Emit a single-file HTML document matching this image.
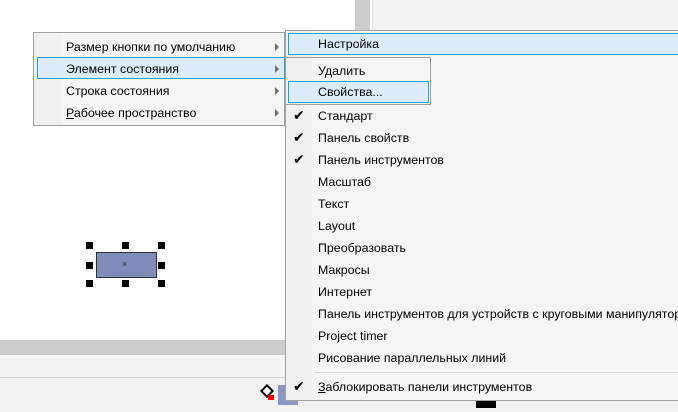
<!DOCTYPE html>
<html><head><meta charset="utf-8"><style>
*{margin:0;padding:0;box-sizing:border-box}
body{width:678px;height:412px;overflow:hidden;position:relative;background:#fff;font-family:"Segoe UI","Liberation Sans","DejaVu Sans",sans-serif;font-size:12.4px;color:#000}
.abs{position:absolute}
.menu{position:absolute;background:#f5f5f5;border:1px solid #a0a0a0}
.col{position:absolute;top:0;bottom:0;left:0;background:#f0f0f0}
.it{position:absolute;height:22px;line-height:22px;white-space:nowrap}
.hl{position:absolute;background:#dcecfc;border:1px solid #26a0da}
.arr{position:absolute;width:0;height:0;border-top:4px solid transparent;border-bottom:4px solid transparent;border-left:4px solid #707070}
.chk{position:absolute;font-size:14px;font-weight:bold}
.h{position:absolute;width:7px;height:7px;background:#000}
</style></head><body>
<div class="abs" style="left:355px;top:0;width:15px;height:30px;background:#cccccc"></div>
<div class="abs" style="left:370px;top:0;width:2px;height:30px;background:#fff"></div>
<div class="abs" style="left:372px;top:0;width:306px;height:30px;background:#f2f2f2;border-left:1px solid #ddd"></div>
<div class="abs" style="left:0;top:340px;width:678px;height:15px;background:#cccccc"></div>
<div class="abs" style="left:0;top:355px;width:678px;height:57px;background:#f2f2f2;border-top:2px solid #fff"></div>
<div class="abs" style="left:0;top:377px;width:678px;height:1px;background:#d0d0d0"></div>

<div class="abs" style="left:96px;top:252px;width:61px;height:26px;background:#7f8bb8;border:1px solid #333"></div>
<div class="abs" style="left:122px;top:259px;font-size:9px;color:#333">×</div>
<div class="h" style="left:86px;top:242px"></div><div class="h" style="left:122px;top:242px"></div><div class="h" style="left:158px;top:242px"></div>
<div class="h" style="left:86px;top:262px"></div><div class="h" style="left:158px;top:262px"></div>
<div class="h" style="left:86px;top:280px"></div><div class="h" style="left:122px;top:280px"></div><div class="h" style="left:158px;top:280px"></div>

<div class="abs" style="left:262px;top:386px;width:10px;height:10px;border:2px solid #000;transform:rotate(45deg);background:#fff"></div>
<div class="abs" style="left:268px;top:395px;width:6px;height:5px;background:#e00"></div>
<div class="abs" style="left:278px;top:385px;width:20px;height:20px;background:#8a96c4"></div>
<div class="abs" style="left:476px;top:398px;width:20px;height:10px;background:#000"></div>

<div class="menu" style="left:33px;top:32px;width:252px;height:94px;">
 <div class="col" style="width:27px"></div>
 <div class="hl" style="left:3px;top:24px;width:248px;height:22px"></div>
 <div class="it" style="left:32px;top:3px">Размер кнопки по умолчанию</div>
 <div class="it" style="left:32px;top:25px">Элемент состояния</div>
 <div class="it" style="left:32px;top:47px">Строка состояния</div>
 <div class="it" style="left:32px;top:69px"><u>Р</u>абочее пространство</div>
 <div class="arr" style="left:241px;top:10px"></div>
 <div class="arr" style="left:241px;top:32px"></div>
 <div class="arr" style="left:241px;top:54px"></div>
 <div class="arr" style="left:241px;top:76px"></div>
</div>

<div class="menu" style="left:285px;top:30px;width:400px;height:371px;">
 <div class="col" style="width:26px"></div>
 <div class="hl" style="left:2px;top:2px;width:400px;height:22px"></div>
 <div class="it" style="left:32px;top:2px">Настройка</div>
 <div class="chk" style="left:7px;top:76px">✔</div>
 <div class="chk" style="left:7px;top:98px">✔</div>
 <div class="chk" style="left:7px;top:120px">✔</div>
 <div class="it" style="left:32px;top:74px">Стандарт</div>
 <div class="it" style="left:32px;top:96px">Панель свойств</div>
 <div class="it" style="left:32px;top:118px">Панель инструментов</div>
 <div class="it" style="left:32px;top:140px">Масштаб</div>
 <div class="it" style="left:32px;top:162px">Текст</div>
 <div class="it" style="left:32px;top:184px">Layout</div>
 <div class="it" style="left:32px;top:206px">Преобразовать</div>
 <div class="it" style="left:32px;top:228px">Макросы</div>
 <div class="it" style="left:32px;top:250px">Интернет</div>
 <div class="it" style="left:32px;top:272px">Панель инструментов для устройств с круговыми манипуляторами</div>
 <div class="it" style="left:32px;top:294px">Project timer</div>
 <div class="it" style="left:32px;top:316px">Рисование параллельных линий</div>
 <div class="abs" style="left:28px;top:341px;width:380px;height:1px;background:#d7d7d7"></div>
 <div class="chk" style="left:7px;top:347px">✔</div>
 <div class="it" style="left:32px;top:345px"><u>З</u>аблокировать панели инструментов</div>
</div>

<div class="menu" style="left:285px;top:57px;width:146px;height:48px;">
 <div class="col" style="width:26px"></div>
 <div class="hl" style="left:2px;top:23px;width:141px;height:22px"></div>
 <div class="it" style="left:32px;top:2px">Удалить</div>
 <div class="it" style="left:32px;top:23px">Свойства...</div>
</div>
</body></html>
